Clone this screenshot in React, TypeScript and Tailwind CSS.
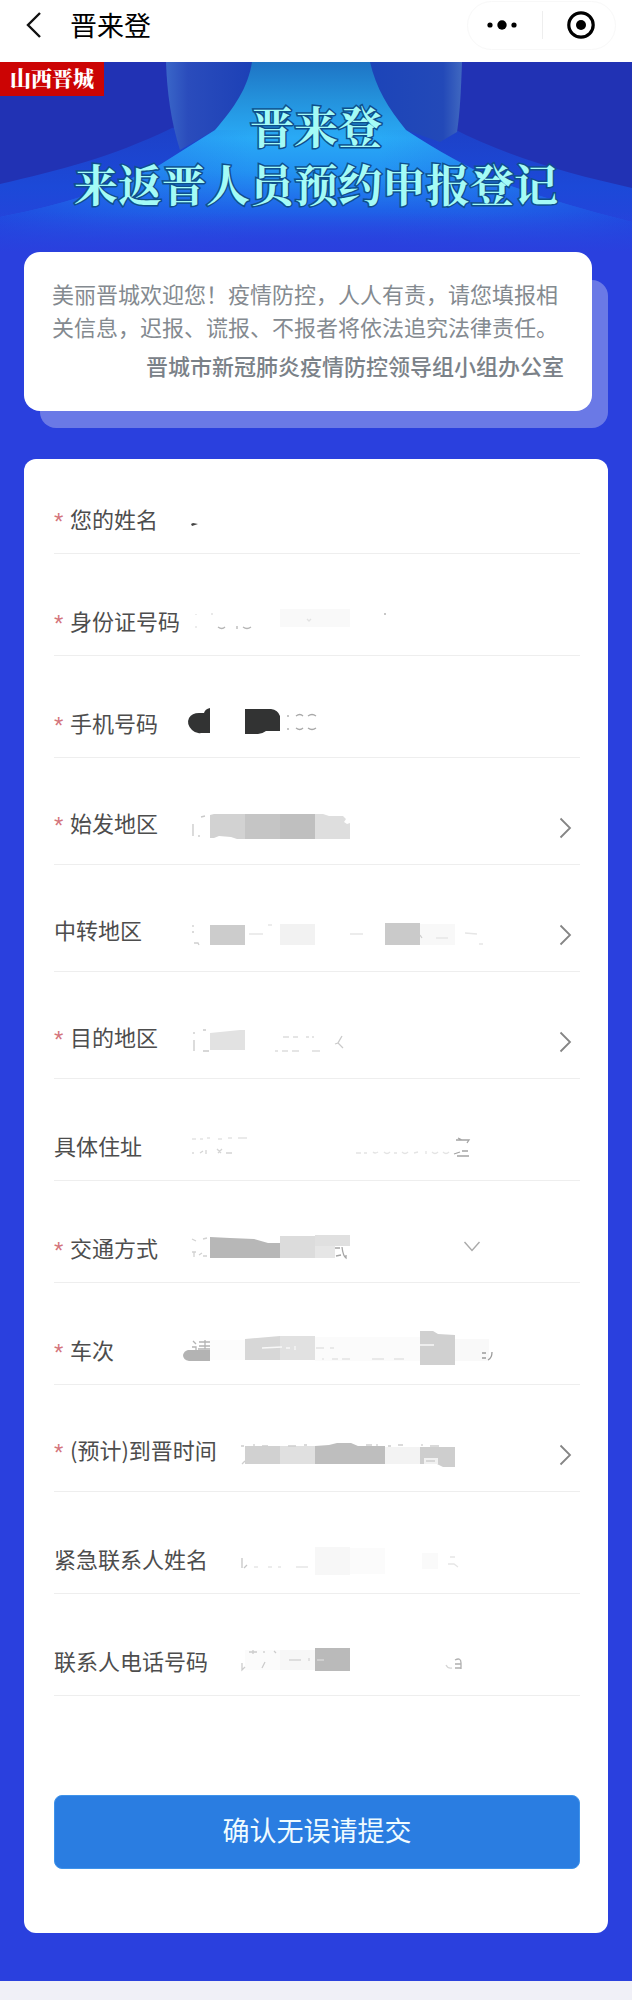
import React, { useState } from "react";

type FieldKind = "text" | "picker" | "select";

type Block = { x: number; y: number; w: number; h: number; fill: string };

type Field = {
  id: string;
  label: string;
  kind: FieldKind;
  required?: boolean;
  // masked value: solid blocks, outlined shapes and what is left of the strokes
  blocks?: Block[];
  shapes?: { d: string; fill: string }[];
  strokes?: { d: string; color: string }[];
};

const fields: Field[] = [
  {
    id: "name",
    label: "您的姓名",
    kind: "text",
    required: true,
    shapes: [{ d: "M137 20l2-1 5 1-3 1-3 1z", fill: "#444444" }],
  },
  {
    id: "id_card",
    label: "身份证号码",
    kind: "text",
    required: true,
    blocks: [{ x: 226, y: 3, w: 70, h: 18, fill: "#f9f9f9" }],
    strokes: [
      { d: "M142 8v1M142 20v2M157 8h2M253 13l2 2 2-2", color: "#e2e2e2" },
      { d: "M164 21q4 3 7 0M183 20v3M189 21q4 3 8 0M330 8h2", color: "#b5b5b5" },
    ],
  },
  {
    id: "phone",
    label: "手机号码",
    kind: "text",
    required: true,
    shapes: [
      {
        d: "M156 0v25h-9q-5 1-9-3-6-6-3-12 3-5 10-5h5q1-4 6-5z",
        fill: "#323333",
      },
      { d: "M191 1h26q7 1 9 7v15h-14q-4 3-8 3h-13z", fill: "#323333" },
    ],
    strokes: [
      {
        d: "M234 7v2M234 20v2M242 8q4-3 7 0M242 20q4 3 7 0M254 8q4-3 8 0M254 20q4 3 8 0",
        color: "#a8a8a8",
      },
    ],
  },
  {
    id: "origin",
    label: "始发地区",
    kind: "picker",
    required: true,
    shapes: [
      { d: "M156 7l4-1h31v25h-8l-6-2-12-1-5 2h-4z", fill: "#d2d2d2" },
      { d: "M191 6h35v25h-35z", fill: "#c5c5c5" },
      { d: "M226 6h35v25h-35z", fill: "#bfbfbf" },
      { d: "M261 6h8l6 2 14 0 3 3-2 3 3 2 3-1v16h-35z", fill: "#dedede" },
    ],
    strokes: [{ d: "M139 16v12M147 9l4-1M145 27v2", color: "#c9c9c9" }],
  },
  {
    id: "transit",
    label: "中转地区",
    kind: "picker",
    blocks: [
      { x: 156, y: 10, w: 35, h: 20, fill: "#cccccc" },
      { x: 226, y: 9, w: 35, h: 21, fill: "#f2f2f2" },
      { x: 331, y: 8, w: 35, h: 22, fill: "#cacaca" },
      { x: 366, y: 9, w: 35, h: 21, fill: "#f8f8f8" },
    ],
    strokes: [
      { d: "M139 10v2M138 17h2M140 28h4l1 2M366 20l2 3", color: "#cfcfcf" },
      { d: "M195 19h14M214 10h4M296 19h13M382 23h12M411 18l12 1M425 29h4", color: "#e6e6e6" },
    ],
  },
  {
    id: "destination",
    label: "目的地区",
    kind: "picker",
    required: true,
    shapes: [{ d: "M156 11l30-3h5v20h-35z", fill: "#e2e2e2" }],
    strokes: [
      { d: "M140 10v2M140 18v11M149 8h3M149 29h6M288 14l-4 7 5 5M281 22l3-1", color: "#cacaca" },
      { d: "M229 15h6M239 15h5M252 15h3M258 15h2M221 29h3M228 29h6M238 29h7M258 29h8", color: "#dddddd" },
    ],
  },
  {
    id: "address",
    label: "具体住址",
    kind: "text",
    strokes: [
      { d: "M138 8h4M146 8h3M153 7h3M164 8h4M174 7h4M184 7h9M302 22h5M310 22h3M319 21q2 2 5 0M330 21q3 3 6 0M340 22h3M348 21q3 3 6 0M360 22l4-1M372 20v3M378 21q3 3 6 0M389 21q3 3 6 0", color: "#e4e4e4" },
      { d: "M139 23v-2M146 22l3-2M152 19v4M163 18l4 4M168 18l-4 4M172 22h6", color: "#d4d4d4" },
      { d: "M402 9h13l-2 3M404 7l4 2M400 23l6-2M403 25h12M408 20h6", color: "#a4a4a4" },
    ],
  },
  {
    id: "transport",
    label: "交通方式",
    kind: "select",
    required: true,
    shapes: [
      { d: "M156 4l20 1 24 1 14 4h12v15h-70z", fill: "#b7b7b7" },
      { d: "M226 3h35v22h-35z", fill: "#dcdcdc" },
      { d: "M261 2h35v11h-35z", fill: "#e0e0e0" },
      { d: "M261 13h20v12h-20z", fill: "#e6e6e6" },
    ],
    strokes: [
      { d: "M138 6l4 2M138 19h4M140 19v5M145 22l3-2M149 6l4-1M149 23h4", color: "#d2d2d2" },
      { d: "M281 15h5M282 23l5-1M288 14q1 9 4 11v-3", color: "#a5a5a5" },
    ],
  },
  {
    id: "train_no",
    label: "车次",
    kind: "text",
    required: true,
    blocks: [
      { x: 156, y: 5, w: 35, h: 20, fill: "#fcfcfc" },
      { x: 261, y: 2, w: 105, h: 24, fill: "#fbfbfb" },
      { x: 401, y: 4, w: 34, h: 22, fill: "#f9f9f9" },
    ],
    shapes: [
      { d: "M134 15h22v11h-21q-6-1-6-6 1-4 5-5z", fill: "#b3b3b3" },
      { d: "M191 4l35-3v24h-35z", fill: "#d7d7d7" },
      { d: "M226 1h35v24h-35z", fill: "#e1e1e1" },
      { d: "M366-4h13l5 3 17 1v30h-35z", fill: "#d0d0d0" },
    ],
    strokes: [
      { d: "M139 6l3 3M138 12h4v4M145 7h11M145 11h11M144 14h12M151 5v9", color: "#b4b4b4" },
      { d: "M208 13l20-1M232 13h4M241 11v4M366 10h14", color: "#f8f8f8" },
      { d: "M262 13h8M276 13h4M269 23v2M278 24h6M288 24h8M318 24h12M340 24h10", color: "#e4e4e4" },
      { d: "M428 18h4M428 23h4M438 17q0 6-4 8", color: "#9a9a9a" },
    ],
  },
  {
    id: "arrival",
    label: "(预计)到晋时间",
    kind: "picker",
    required: true,
    shapes: [
      { d: "M191 11h35v18h-35z", fill: "#d1d1d1" },
      { d: "M226 11h35v18h-35z", fill: "#e0e0e0" },
      { d: "M261 11l14-1 8-2h14l7 3h27v18h-70z", fill: "#bebebe" },
      { d: "M331 12h35v17h-35z", fill: "#f3f3f3" },
      { d: "M366 12h35v20l-12 0-6-3h-17z", fill: "#cecece" },
      { d: "M370 23h14v6h-14z", fill: "#f1f1f1" },
    ],
    strokes: [
      { d: "M187 11h3M200 9v2M208 11h6M234 11h8M250 10h3M312 10h6M323 9v2M334 11h3M344 10h5M368 9v2M376 11h9M188 29l3-3M372 26h9", color: "#cecece" },
    ],
  },
  {
    id: "contact_name",
    label: "紧急联系人姓名",
    kind: "text",
    blocks: [
      { x: 261, y: 3, w: 35, h: 28, fill: "#f7f7f7" },
      { x: 296, y: 4, w: 35, h: 26, fill: "#fbfbfb" },
      { x: 368, y: 9, w: 16, h: 16, fill: "#fafafa" },
    ],
    strokes: [
      { d: "M188 14v10M190 24l3-3", color: "#c6c6c6" },
      { d: "M200 23h4M214 23h4M224 23h3M242 23h12M396 13h5M394 20h6l4 3", color: "#e6e6e6" },
    ],
  },
  {
    id: "contact_phone",
    label: "联系人电话号码",
    kind: "text",
    blocks: [
      { x: 191, y: 4, w: 35, h: 20, fill: "#fbfbfb" },
      { x: 226, y: 4, w: 35, h: 20, fill: "#f7f7f7" },
      { x: 261, y: 2, w: 35, h: 23, fill: "#bababa" },
    ],
    strokes: [
      { d: "M188 17v7l3-3M195 6h8M199 4v4M210 5v2M220 5l2 2M208 22l3-6", color: "#cccccc" },
      { d: "M235 14h12M255 12v3M263 14h7M392 19q2 4 6 3", color: "#d6d6d6" },
      { d: "M401 14q6-3 6 3v6M401 22h6M401 18h6", color: "#b0b0b0" },
    ],
  },
];

function MaskedValue({ field }: { field: Field }) {
  return (
    <svg
      aria-hidden="true"
      width="526"
      height="32"
      fill="none"
      className="pointer-events-none absolute left-0 top-0 overflow-visible"
    >
      {field.blocks?.map((b) => (
        <rect key={`${b.x}`} x={b.x} y={b.y} width={b.w} height={b.h} fill={b.fill} />
      ))}
      {field.shapes?.map((s) => (
        <path key={s.d} d={s.d} fill={s.fill} />
      ))}
      {field.strokes?.map((s) => (
        <path key={s.d} d={s.d} stroke={s.color} strokeWidth="1.3" />
      ))}
    </svg>
  );
}

function FormRow({ field }: { field: Field }) {
  const [value, setValue] = useState("");
  const isPicker = field.kind === "picker";

  return (
    <div
      className={`border-b border-[#eeeeee] first:pt-[45px] ${
        isPicker ? "pt-[50px] pb-6" : "pt-[52px] pb-[17px]"
      }`}
    >
      <div className="relative flex h-8 items-start">
        {field.required && (
          <span className="w-4 shrink-0 font-['Liberation_Sans',sans-serif] text-2xl leading-9 text-[#d4757c]">
            *
          </span>
        )}
        <label
          htmlFor={field.id}
          className="shrink-0 text-[22px] leading-7 text-[#4d4d4d]"
        >
          {field.label}
        </label>

        {field.kind === "text" && (
          <input
            id={field.id}
            type="text"
            value={value}
            onChange={(e) => setValue(e.target.value)}
            className="ml-6 h-8 min-w-0 flex-1 bg-transparent text-[22px] outline-none"
          />
        )}

        {isPicker && (
          <button
            id={field.id}
            type="button"
            className="ml-6 flex h-8 min-w-0 flex-1 items-end justify-end pr-1.5"
          >
            <svg width="18" height="24" viewBox="0 0 18 24" fill="none">
              <path d="M4.5 2.5L14 12L4.5 21.5" stroke="#858585" strokeWidth="1.8" />
            </svg>
          </button>
        )}

        {field.kind === "select" && (
          <div className="ml-6 mr-[98px] flex h-7 min-w-0 flex-1 items-center">
            <select
              id={field.id}
              className="h-7 min-w-0 flex-1 appearance-none bg-transparent text-[22px] outline-none"
            />
            <svg width="20" height="16" viewBox="0 0 20 16" fill="none">
              <path d="M2.5 3L10 11.5L17.5 3" stroke="#aaaaaa" strokeWidth="1.4" />
            </svg>
          </div>
        )}

        <MaskedValue field={field} />
      </div>
    </div>
  );
}

function NavBar() {
  return (
    <header className="flex h-[62px] items-center justify-between bg-white pb-3 pl-6 pr-4">
      <div className="flex items-center gap-6">
        <button type="button" aria-label="返回">
          <svg width="22" height="28" viewBox="0 0 22 28" fill="none">
            <path d="M16 2L4 14L16 26" stroke="#111111" strokeWidth="2.4" />
          </svg>
        </button>
        <span className="text-[27px] leading-9 text-black">晋来登</span>
      </div>
      <div className="flex h-[49px] w-[149px] items-center rounded-full border border-[#f8f8f8]">
        <button type="button" aria-label="更多" className="flex flex-1 justify-center pr-1.5">
          <svg width="32" height="12" viewBox="0 0 32 12">
            <circle cx="4" cy="6" r="2.6" />
            <circle cx="16" cy="6" r="4.7" />
            <circle cx="28" cy="6" r="2.6" />
          </svg>
        </button>
        <div className="h-7 w-px bg-[#eeeeee]" />
        <button type="button" aria-label="关闭" className="flex flex-1 justify-center pl-1">
          <svg width="28" height="28" viewBox="0 0 28 28">
            <circle cx="14" cy="14" r="12.2" fill="none" stroke="#000" strokeWidth="3.2" />
            <circle cx="14" cy="14" r="5" />
          </svg>
        </button>
      </div>
    </header>
  );
}

function HeroBackground() {
  return (
    <svg
      aria-hidden="true"
      viewBox="0 0 632 190"
      preserveAspectRatio="none"
      className="absolute inset-0 h-full w-full"
    >
      <defs>
        <linearGradient id="floor" gradientUnits="userSpaceOnUse" x1="0" y1="60" x2="0" y2="190">
          <stop offset="0" stopColor="#1d40c6" />
          <stop offset="0.5" stopColor="#1c49d8" />
          <stop offset="1" stopColor="#2a40de" />
        </linearGradient>
        <linearGradient id="beam" gradientUnits="userSpaceOnUse" x1="0" y1="0" x2="0" y2="190">
          <stop offset="0" stopColor="#1e74c4" />
          <stop offset="0.2" stopColor="#2492dc" />
          <stop offset="0.4" stopColor="#29aaf6" />
          <stop offset="0.58" stopColor="#2392f2" />
          <stop offset="0.78" stopColor="#1f62e8" />
          <stop offset="1" stopColor="#2a40de" />
        </linearGradient>
        {/* keeps the bright part of the beam in the middle of the banner */}
        <linearGradient id="beamSides" x1="0" y1="0" x2="1" y2="0">
          <stop offset="0" stopColor="#1f48de" stopOpacity="0.8" />
          <stop offset="0.25" stopColor="#1f5ae4" stopOpacity="0.25" />
          <stop offset="0.4" stopColor="#1f5ae4" stopOpacity="0" />
          <stop offset="0.6" stopColor="#1f5ae4" stopOpacity="0" />
          <stop offset="0.75" stopColor="#1f5ae4" stopOpacity="0.25" />
          <stop offset="1" stopColor="#1f48de" stopOpacity="0.8" />
        </linearGradient>
        <linearGradient id="fade" x1="0" y1="0" x2="0" y2="1">
          <stop offset="0" stopColor="#2a40de" stopOpacity="0" />
          <stop offset="1" stopColor="#2a40de" />
        </linearGradient>
        <linearGradient id="pillarLeft" x1="0" y1="0" x2="1" y2="0">
          <stop offset="0" stopColor="#3a66c8" />
          <stop offset="0.25" stopColor="#2a4cbc" />
          <stop offset="1" stopColor="#1c40b6" />
        </linearGradient>
        <linearGradient id="pillarRight" x1="0" y1="0" x2="1" y2="0">
          <stop offset="0" stopColor="#1c44b8" />
          <stop offset="0.8" stopColor="#2349b8" />
          <stop offset="1" stopColor="#4068c0" />
        </linearGradient>
      </defs>
      <rect width="632" height="190" fill="#2132b4" />
      <path d="M0 122C60 108 110 96 172 66L217 58H405L452 66C510 96 570 112 632 126V190H0z" fill="url(#floor)" />
      <path d="M166 0H254C250 28 236 48 215 68L180 88C171 60 167 30 166 0z" fill="url(#pillarLeft)" />
      <path d="M368 0H462C461 28 460 50 457 70L440 80L406 68C386 48 374 28 368 0z" fill="url(#pillarRight)" />
      <path
        d="M252 0H370C376 26 388 46 406 68C440 90 465 104 500 120Q560 142 632 160V190H0V155Q90 138 158 104L215 68C234 46 248 26 252 0z"
        fill="url(#beam)"
      />
      <path
        d="M406 68C440 90 465 104 500 120Q560 142 632 160V190H0V155Q90 138 158 104L215 68z"
        fill="url(#beamSides)"
      />
      <rect y="150" width="632" height="40" fill="url(#fade)" />
    </svg>
  );
}

export default function App() {
  const handleSubmit = (e: React.FormEvent) => {
    e.preventDefault();
  };

  return (
    <div className="min-h-screen bg-[#f0f0f7] font-['Noto_Sans_CJK_SC',sans-serif]">
      <NavBar />

      <main className="bg-[#2a40de] pb-12">
        <div className="relative h-[190px]">
          <HeroBackground />
          <div className="relative">
            <div className="flex h-[34px] w-fit items-center bg-[#cc0404] px-[10px] pb-1 font-['Noto_Serif_CJK_SC','Noto_Sans_CJK_SC',serif] text-[21px] font-black leading-7 text-white">
              山西晋城
            </div>
            <h1 className="text-center font-['Noto_Serif_CJK_SC','Noto_Sans_CJK_SC',serif] text-[44px] font-bold leading-[58px] text-[#a4fbf6] [-webkit-text-stroke:3px_#0f4f8c] [paint-order:stroke]">
              <span className="block">晋来登</span>
              <span className="block">来返晋人员预约申报登记</span>
            </h1>
          </div>
        </div>

        <div className="px-6">
          <section className="relative pb-[17px] pr-4">
            <div className="absolute bottom-0 left-4 right-0 top-7 rounded-2xl bg-[#6a79e6]" />
            <div className="relative rounded-2xl bg-white px-7 pb-[29px] pt-[25px] text-[22px] leading-[33px] text-[#848a90]">
              <p>
                美丽晋城欢迎您！疫情防控，人人有责，请您填报相关信息，迟报、谎报、不报者将依法追究法律责任。
              </p>
              <p className="mt-[6px] text-right font-medium text-[#7a8188]">
                晋城市新冠肺炎疫情防控领导组小组办公室
              </p>
            </div>
          </section>

          <form
            onSubmit={handleSubmit}
            className="mt-[31px] rounded-xl bg-white pb-16 pl-[30px] pr-7"
          >
            <div>
              {fields.map((field) => (
                <FormRow key={field.id} field={field} />
              ))}
            </div>
            <button
              type="submit"
              className="mt-[99px] h-[74px] w-full rounded-lg border border-[#3f93ea] bg-[#2a7de1] pb-1 text-[27px] text-[#effbff]"
            >
              确认无误请提交
            </button>
          </form>
        </div>
      </main>
    </div>
  );
}
